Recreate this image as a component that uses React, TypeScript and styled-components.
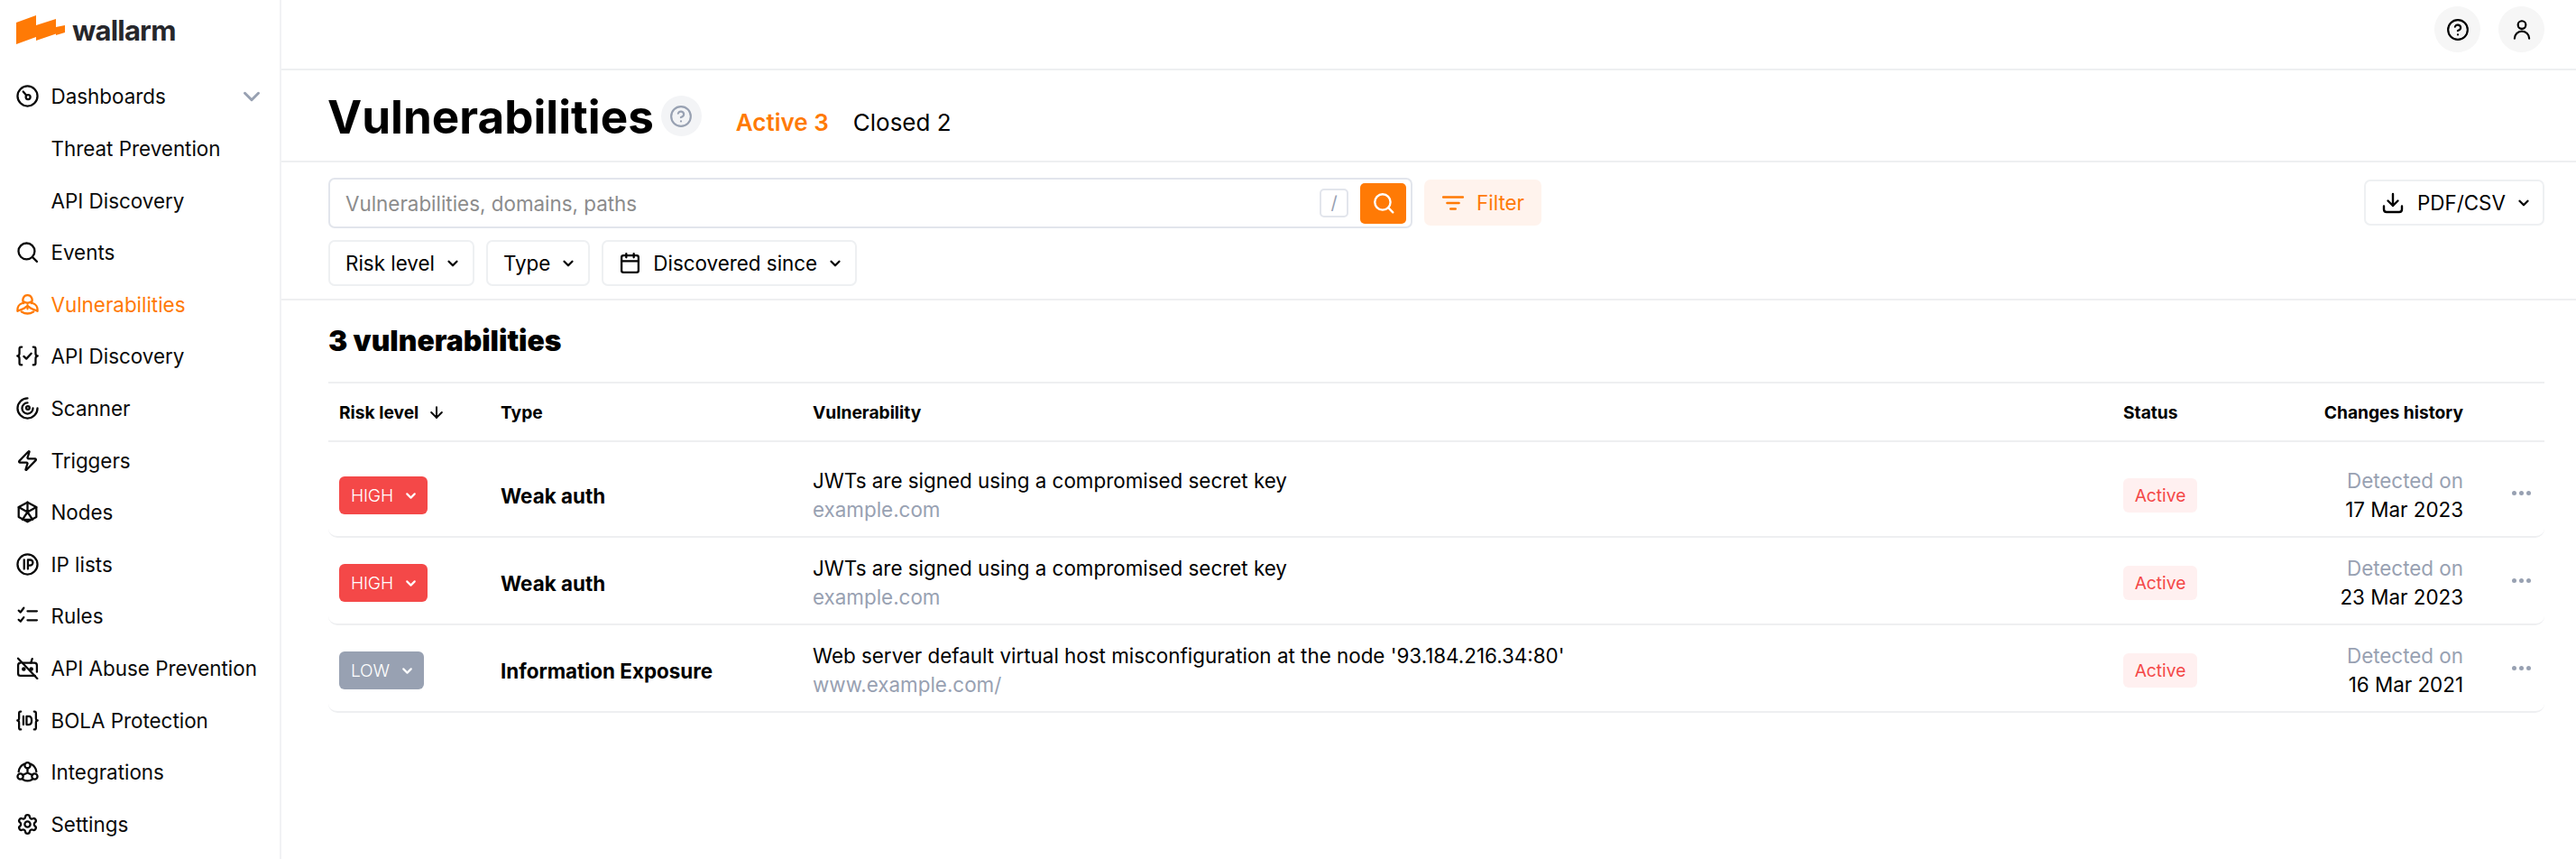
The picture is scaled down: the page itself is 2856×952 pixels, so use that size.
import React from "react";
import styled, { createGlobalStyle } from "styled-components";
import { Zap, Settings, ChevronDown, Calendar, ArrowDown, CircleHelp } from "lucide-react";

const ORANGE = "#ff7a05";
const GRAY = "#98a1b2";
const LINE = "#eeeff1";
const COLS = "179px 346px 1453px 200px 177px 90px";

const Global = createGlobalStyle`
  html, body { margin: 0; padding: 0; background: #fff; height: 100%; overflow: hidden; }
  body { font-family: Inter, "Liberation Sans", sans-serif; color: #000; }
  * { box-sizing: border-box; }
`;

const Page = styled.div`
  display: flex;
  width: 2856px;
  height: 952px;
  overflow: hidden;
`;
const Sidebar = styled.aside`
  width: 312px;
  flex: none;
  border-right: 2px solid #f1f2f4;
  display: flex;
  flex-direction: column;
`;
const LogoRow = styled.div`
  height: 78.2px;
  flex: none;
  display: flex;
  align-items: flex-start;
  padding: 17px 0 0 18px;
  gap: 8px;
`;
const LogoText = styled.span`
  font-size: 31px;
  line-height: 32px;
  font-weight: 700;
  letter-spacing: -0.8px;
  color: #26272b;
  margin-top: 1px;
`;
const NavRow = styled.div<{ $active?: boolean }>`
  height: 57.6px;
  flex: none;
  display: flex;
  align-items: center;
  padding-left: 18px;
  padding-right: 16px;
  gap: 13.5px;
  font-size: 22.4px;
  color: ${(p) => (p.$active ? ORANGE : "#0a0a0a")};
  svg { flex: none; }
`;
const NavSub = styled(NavRow)`
  padding-left: 56.5px;
`;
const NavLabel = styled.span`
  flex: 1;
`;
const Main = styled.main`
  flex: 1;
  min-width: 0;
  display: flex;
  flex-direction: column;
`;
const TopBar = styled.header`
  height: 78px;
  border-bottom: 2px solid ${LINE};
  display: flex;
  justify-content: flex-end;
  align-items: flex-start;
  gap: 20px;
  padding: 7px 35px 0 0;
`;
const RoundButton = styled.button`
  width: 51px;
  height: 51px;
  border: 0;
  padding: 0;
  border-radius: 50%;
  background: #f6f6f6;
  display: flex;
  align-items: center;
  justify-content: center;
`;
const TitleBar = styled.section`
  height: 102px;
  border-bottom: 2px solid ${LINE};
  display: flex;
  align-items: flex-start;
  padding: 28px 0 0 52px;
`;
const Title = styled.h1`
  margin: 0 0 0 -1px;
  font-size: 51.2px;
  line-height: 46px;
  font-weight: 700;
`;
const HelpBubble = styled.span`
  width: 45px;
  height: 45px;
  margin: 0 0 0 8px;
  border-radius: 50%;
  background: #f3f4f6;
  display: flex;
  align-items: center;
  justify-content: center;
  color: ${GRAY};
`;
const Tabs = styled.div`
  display: flex;
  gap: 27px;
  margin: 14px 0 0 38px;
  font-size: 26px;
  line-height: 32px;
`;
const Tab = styled.span<{ $active?: boolean }>`
  color: ${(p) => (p.$active ? ORANGE : "#000")};
  font-weight: ${(p) => (p.$active ? 600 : 400)};
`;
const FilterSection = styled.section`
  height: 153px;
  border-bottom: 2px solid ${LINE};
  padding: 17px 35px 0 52px;
  display: flex;
  flex-direction: column;
  gap: 13px;
`;
const SearchLine = styled.div`
  display: flex;
  align-items: flex-start;
`;
const SearchBox = styled.div`
  width: 1202px;
  height: 56px;
  border: 2px solid #e2e5ec;
  border-radius: 7px;
  display: flex;
  align-items: center;
  padding: 0 5px 0 17px;
  font-size: 22.4px;
  color: #8c8c8c;
`;
const Placeholder = styled.span`
  flex: 1;
`;
const KeyHint = styled.span`
  width: 32px;
  height: 32px;
  border: 2px solid #e2e5ec;
  border-radius: 5px;
  display: flex;
  align-items: center;
  justify-content: center;
  font-size: 20px;
  color: ${GRAY};
  margin-right: 13px;
`;
const SearchButton = styled.button`
  width: 51px;
  height: 45px;
  border: 0;
  padding: 0;
  border-radius: 5px;
  background: ${ORANGE};
  display: flex;
  align-items: center;
  justify-content: center;
`;
const FilterButton = styled.button`
  width: 130px;
  height: 51px;
  margin: 2px 0 0 13px;
  border: 0;
  border-radius: 7px;
  background: #fff3ed;
  color: ${ORANGE};
  font: 400 22.4px Inter, sans-serif;
  display: flex;
  align-items: center;
  padding: 0 0 0 19px;
  gap: 13px;
`;
const Spacer = styled.div`
  flex: 1;
`;
const Outline = styled.button`
  height: 51px;
  border: 2px solid #eef0f2;
  border-radius: 7px;
  background: #fff;
  color: #000;
  font: 400 22.4px Inter, sans-serif;
  display: flex;
  align-items: center;
  padding: 0 13px 0 17px;
  gap: 11px;
  svg { flex: none; }
`;
const ExportButton = styled(Outline)`
  margin-top: 2px;
  width: 200px;
  padding: 0 0 0 18px;
  gap: 15px;
  svg:last-child { margin-left: -4px; }
`;
const CalendarIcon = styled(Calendar)`
  margin-right: 2px;
`;
const Chips = styled.div`
  display: flex;
  gap: 13px;
`;
const Content = styled.section`
  padding: 0 35px 0 52px;
`;
const Heading = styled.h2`
  margin: 0;
  height: 92px;
  display: flex;
  align-items: center;
  font-size: 31.8px;
  font-weight: 900;
  padding-bottom: 2px;
  border-bottom: 2px solid ${LINE};
`;
const Row = styled.div<{ $first?: boolean }>`
  display: grid;
  grid-template-columns: ${COLS};
  padding: ${(p) => (p.$first ? "14px" : "5px")} 0 0 12px;
  height: ${(p) => (p.$first ? "106px" : "97px")};
  align-items: center;
  border-bottom: 2px solid ${LINE};
  border-radius: 0 0 10px 10px;
`;
const HeadRow = styled.div`
  display: grid;
  grid-template-columns: ${COLS};
  padding-left: 12px;
  height: 65px;
  align-items: center;
  border-bottom: 2px solid ${LINE};
  font-size: 19.2px;
  font-weight: 700;
`;
const HeadCell = styled.div<{ $right?: boolean }>`
  display: flex;
  align-items: center;
  gap: 10px;
  justify-content: ${(p) => (p.$right ? "flex-end" : "flex-start")};
`;
const Risk = styled.span<{ $color: string }>`
  display: inline-flex;
  align-items: center;
  height: 41.5px;
  padding: 0 10px 0 13px;
  gap: 11px;
  width: fit-content;
  border-radius: 6px;
  background: ${(p) => p.$color};
  color: #fff;
  font-size: 19.2px;
  font-weight: 300;
  letter-spacing: -0.2px;
`;
const TypeName = styled.div`
  font-size: 22.4px;
  font-weight: 700;
`;
const Stack = styled.div<{ $right?: boolean }>`
  display: flex;
  flex-direction: column;
  gap: 2px;
  font-size: 22.4px;
  line-height: 30px;
  margin-top: -1px;
  text-align: ${(p) => (p.$right ? "right" : "left")};
`;
const Muted = styled.span`
  color: ${GRAY};
`;
const StatusTag = styled.span`
  display: inline-flex;
  align-items: center;
  justify-content: center;
  width: 82px;
  height: 38px;
  border-radius: 6px;
  background: #fff0f0;
  color: #f44848;
  font-size: 19.2px;
`;
const Dots = styled.div`
  display: flex;
  justify-content: flex-end;
  gap: 3px;
  padding-right: 15px;
  margin-top: -6px;
`;
const Dot = styled.i`
  width: 5px;
  height: 5px;
  border-radius: 50%;
  background: ${GRAY};
`;

const Svg: React.FC<{ children: React.ReactNode; size?: number; c?: string; w?: number }> = ({ children, size = 25, c = "#0a0a0a", w = 2 }) => (
  <svg width={size} height={size} viewBox="0 0 24 24" fill="none" stroke={c} strokeWidth={w} strokeLinecap="round" strokeLinejoin="round">
    {children}
  </svg>
);

const Logo = () => (
  <svg width="54" height="32" viewBox="0 0 54 32" fill={ORANGE}>
    <path d="M0 8 L22 0 L22 11 L44 4 L44 13 L54 11 L54 19 L44 22 L44 20.5 L22 28 L22 24 L0 32 Z" />
  </svg>
);

const icons: Record<string, React.ReactNode> = {
  dash: (
    <Svg w={2.2}>
      <circle cx="12" cy="12" r="10.6" />
      <circle cx="12.6" cy="13" r="2.4" />
      <path d="M10.8 11.2 L7.4 7.2" />
    </Svg>
  ),
  search: (
    <Svg w={2.2}>
      <circle cx="11" cy="11" r="8.6" />
      <path d="M17.4 17.4 L22 22" />
    </Svg>
  ),
  bio: (
    <Svg c={ORANGE} w={2.2}>
      <path d="M8 10.6 C5.6 6.4 8 2 12 2 C16 2 18.4 6.4 16 10.6" />
      <path d="M8.4 9 Q12 11.6 15.6 9" />
      <path d="M7.2 10.4 C3.2 11 1 14.6 1.4 19 C4.6 17 8.4 17.2 10.8 14.2" />
      <path d="M16.8 10.4 C20.8 11 23 14.6 22.6 19 C19.4 17 15.6 17.2 13.2 14.2" />
      <path d="M5.6 19.6 Q12 23.6 18.4 19.6" />
      <path d="M12 12.6 V16.6" />
    </Svg>
  ),
  api: (
    <Svg w={2.2}>
      <path d="M6 2.5 H5 Q3.4 2.5 3.4 4.5 V9 Q3.4 12 1.2 12 Q3.4 12 3.4 15 V19.5 Q3.4 21.5 5 21.5 H6" />
      <path d="M18 2.5 H19 Q20.6 2.5 20.6 4.5 V9 Q20.6 12 22.8 12 Q20.6 12 20.6 15 V19.5 Q20.6 21.5 19 21.5 H18" />
      <path d="M8 12.4 L10.8 15 L16 9.4" />
    </Svg>
  ),
  scan: (
    <Svg w={2.2}>
      <path d="M12 1.4 A10.6 10.6 0 1 0 22.6 12" />
      <path d="M12 6.2 A5.8 5.8 0 1 0 17.8 12 " />
      <circle cx="12.4" cy="11.6" r="1.8" />
    </Svg>
  ),
  nodes: (
    <Svg w={2.2}>
      <path d="M12 1.6 L21.4 6.8 V17.2 L12 22.4 L2.6 17.2 V6.8 Z" />
      <path d="M12 1.6 L12 12 M2.6 6.8 L12 12 L21.4 6.8 M12 12 L6.6 20 M12 12 L17.4 20 M6.6 20 H17.4" />
    </Svg>
  ),
  ip: (
    <Svg w={2.2}>
      <circle cx="12" cy="12" r="10.6" />
      <path d="M8.4 7.2 V16.8 M12.4 16.8 V7.2 H14.8 A2.9 2.9 0 0 1 14.8 13 H12.4" />
    </Svg>
  ),
  rules: (
    <Svg w={2.2}>
      <path d="M2.6 6.4 L4.6 8.2 L8 3.6 M2.6 16.2 L4.6 18 L8 13.6 M12 7 H22 M12 16.6 H22" />
    </Svg>
  ),
  abuse: (
    <Svg w={2.2}>
      <path d="M7 6.4 H19.4 Q22 6.4 22 9 V16 M20 20 H4.6 Q2 20 2 17.4 V9 Q2 6.4 4.6 6.4" />
      <path d="M2 1.6 L22.4 23 M17 2 L15.6 6.4" />
      <circle cx="8" cy="13" r="1.1" fill="#0a0a0a" />
      <circle cx="16" cy="13" r="1.1" fill="#0a0a0a" />
    </Svg>
  ),
  bola: (
    <Svg w={2.2}>
      <path d="M5 2.5 H4.4 Q3 2.5 3 4.4 V9.6 Q3 12 1.2 12 Q3 12 3 14.4 V19.6 Q3 21.5 4.4 21.5 H5" />
      <path d="M19 2.5 H19.6 Q21 2.5 21 4.4 V9.6 Q21 12 22.8 12 Q21 12 21 14.4 V19.6 Q21 21.5 19.6 21.5 H19" />
      <path d="M7.6 7.6 V16.4 M11 7.6 V16.4 H13.4 Q16.4 16.4 16.4 12 Q16.4 7.6 13.4 7.6 H11" />
    </Svg>
  ),
  integ: (
    <Svg w={2.2}>
      <circle cx="12" cy="5" r="3" />
      <circle cx="4.4" cy="16.8" r="3" />
      <circle cx="19.6" cy="16.8" r="3" />
      <path d="M12 8 V13 L6.8 15.4 M12 13 L17.2 15.4 M8.4 3.6 A10 10 0 0 0 2.6 11.6 M15.6 3.6 A10 10 0 0 1 21.4 11.6 M7.2 20.2 A10 10 0 0 0 16.8 20.2" />
    </Svg>
  ),
};

const nav: { label: string; icon?: React.ReactNode; active?: boolean; sub?: boolean; chevron?: boolean }[] = [
  { label: "Dashboards", icon: icons.dash, chevron: true },
  { label: "Threat Prevention", sub: true },
  { label: "API Discovery", sub: true },
  { label: "Events", icon: icons.search },
  { label: "Vulnerabilities", icon: icons.bio, active: true },
  { label: "API Discovery", icon: icons.api },
  { label: "Scanner", icon: icons.scan },
  { label: "Triggers", icon: <Zap size={25} color="#0a0a0a" strokeWidth={2.2} /> },
  { label: "Nodes", icon: icons.nodes },
  { label: "IP lists", icon: icons.ip },
  { label: "Rules", icon: icons.rules },
  { label: "API Abuse Prevention", icon: icons.abuse },
  { label: "BOLA Protection", icon: icons.bola },
  { label: "Integrations", icon: icons.integ },
  { label: "Settings", icon: <Settings size={25} color="#0a0a0a" strokeWidth={2.2} /> },
];

const rows = [
  { risk: "HIGH", color: "#f44848", type: "Weak auth", title: "JWTs are signed using a compromised secret key", host: "example.com", date: "17 Mar 2023" },
  { risk: "HIGH", color: "#f44848", type: "Weak auth", title: "JWTs are signed using a compromised secret key", host: "example.com", date: "23 Mar 2023" },
  { risk: "LOW", color: "#98a1b2", type: "Information Exposure", title: "Web server default virtual host misconfiguration at the node '93.184.216.34:80'", host: "www.example.com/", date: "16 Mar 2021" },
];

const Chev = ({ color = "#000", size = 18 }: { color?: string; size?: number }) => <ChevronDown size={size} color={color} strokeWidth={3} />;

export default function App() {
  return (
    <Page>
      <Global />
      <Sidebar>
        <LogoRow>
          <Logo />
          <LogoText>wallarm</LogoText>
        </LogoRow>
        {nav.map((n, i) =>
          n.sub ? (
            <NavSub key={i}>
              <NavLabel>{n.label}</NavLabel>
            </NavSub>
          ) : (
            <NavRow key={i} $active={n.active}>
              {n.icon}
              <NavLabel>{n.label}</NavLabel>
              {n.chevron && <ChevronDown size={30} color={GRAY} strokeWidth={2.4} />}
            </NavRow>
          )
        )}
      </Sidebar>
      <Main>
        <TopBar>
          <RoundButton>
            <CircleHelp size={26} color="#000" strokeWidth={2} />
          </RoundButton>
          <RoundButton>
            <Svg size={26} c="#000">
              <circle cx="12" cy="7" r="4" />
              <path d="M4.5 21 A7.5 7.5 0 0 1 19.5 21" />
            </Svg>
          </RoundButton>
        </TopBar>
        <TitleBar>
          <Title>Vulnerabilities</Title>
          <HelpBubble>
            <CircleHelp size={26} strokeWidth={2} />
          </HelpBubble>
          <Tabs>
            <Tab $active>Active 3</Tab>
            <Tab>Closed 2</Tab>
          </Tabs>
        </TitleBar>
        <FilterSection>
          <SearchLine>
            <SearchBox>
              <Placeholder>Vulnerabilities, domains, paths</Placeholder>
              <KeyHint>/</KeyHint>
              <SearchButton>
                <Svg size={26} c="#fff" w={2.2}>
                  <circle cx="11" cy="11" r="8" />
                  <path d="M17 17 L21.5 21.5" />
                </Svg>
              </SearchButton>
            </SearchBox>
            <FilterButton>
              <Svg size={26} c={ORANGE} w={2.4}>
                <path d="M2 6 H22 M6 12 H18 M9.5 18 H14.5" />
              </Svg>
              Filter
            </FilterButton>
            <Spacer />
            <ExportButton>
              <Svg size={24} c="#000" w={2.4}>
                <path d="M12 2 V15 M6.5 9.5 L12 15 L17.5 9.5 M2 15.5 V19 Q2 22 5 22 H19 Q22 22 22 19 V15.5" />
              </Svg>
              PDF/CSV
              <Chev />
            </ExportButton>
          </SearchLine>
          <Chips>
            <Outline>
              Risk level
              <Chev />
            </Outline>
            <Outline>
              Type
              <Chev />
            </Outline>
            <Outline>
              <CalendarIcon size={25} color="#000" strokeWidth={2.2} />
              Discovered since
              <Chev />
            </Outline>
          </Chips>
        </FilterSection>
        <Content>
          <Heading>3 vulnerabilities</Heading>
          <HeadRow>
            <HeadCell>
              Risk level
              <ArrowDown size={20} color="#000" strokeWidth={2.4} />
            </HeadCell>
            <HeadCell>Type</HeadCell>
            <HeadCell>Vulnerability</HeadCell>
            <HeadCell>Status</HeadCell>
            <HeadCell $right>Changes history</HeadCell>
            <div />
          </HeadRow>
          {rows.map((r, i) => (
            <Row key={i} $first={i === 0}>
              <Risk $color={r.color}>
                {r.risk}
                <Chev color="#fff" size={17} />
              </Risk>
              <TypeName>{r.type}</TypeName>
              <Stack>
                <span>{r.title}</span>
                <Muted>{r.host}</Muted>
              </Stack>
              <StatusTag>Active</StatusTag>
              <Stack $right>
                <Muted>Detected on</Muted>
                <span>{r.date}</span>
              </Stack>
              <Dots>
                <Dot />
                <Dot />
                <Dot />
              </Dots>
            </Row>
          ))}
        </Content>
      </Main>
    </Page>
  );
}
